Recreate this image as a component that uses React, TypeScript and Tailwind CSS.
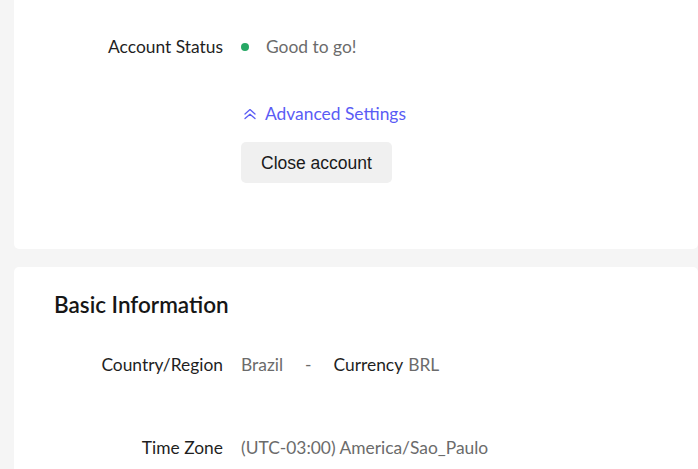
import React from "react";

function ChevronsUp() {
  return (
    <svg width="14" height="14" viewBox="0 0 14 14" fill="none" stroke="currentColor" strokeWidth="1.3" strokeLinecap="round" strokeLinejoin="round">
      <path d="M2 7 L7 2.6 L12 7" />
      <path d="M2 11.6 L7 7.2 L12 11.6" />
    </svg>
  );
}

function Row({ label, children, className = "" }: { label: string; children: React.ReactNode; className?: string }) {
  return (
    <div className={"flex items-center " + className}>
      <div className="w-[169px] shrink-0 text-right text-[#1f1f1f]">{label}</div>
      <div className="ml-[18px] flex items-center text-[#6b6b6b]">{children}</div>
    </div>
  );
}

export default function App() {
  return (
    <div
      className="h-[469px] w-[698px] overflow-hidden bg-[#f5f5f5] pl-[14px] text-[17.4px] leading-[20px]"
      style={{ fontFamily: "Lato, 'Open Sans', sans-serif" }}
    >
      <div className="flex h-[249px] flex-col rounded-b-[5px] bg-white pl-[40px]">
        <Row label="Account Status" className="mt-[37px] h-[20px]">
          <span className="h-[8px] w-[8px] rounded-full bg-[#26a865]" />
          <span className="ml-[17px]">Good to go!</span>
        </Row>
        <div className="ml-[187px] mt-[47px] flex h-[20px] items-center text-[#5a5cf5]">
          <span className="ml-[2px]"><ChevronsUp /></span>
          <span className="ml-[8px]">Advanced Settings</span>
        </div>
        <div className="ml-[187px] mt-[18px]">
          <button
            className="h-[41px] rounded-[5px] bg-[#f0f0f0] px-[20px] text-[17.5px] text-[#1a1a1a]"
            style={{ fontFamily: "'Liberation Sans', Arial, sans-serif" }}
          >
            Close account
          </button>
        </div>
      </div>
      <div className="mt-[18px] flex h-[240px] flex-col rounded-t-[5px] bg-white pl-[40px]">
        <h2 className="mt-[25px] h-[26px] text-[22.5px] font-semibold leading-[26px] text-[#161616]">Basic Information</h2>
        <Row label="Country/Region" className="mt-[37px] h-[20px]">
          <span>Brazil</span>
          <span className="ml-[22px]">-</span>
          <span className="ml-[22px] text-[#1f1f1f]">Currency</span>
          <span className="ml-[5px]">BRL</span>
        </Row>
        <Row label="Time Zone" className="mt-[63px] h-[20px]">
          <span>(UTC-03:00) America/Sao_Paulo</span>
        </Row>
      </div>
    </div>
  );
}
